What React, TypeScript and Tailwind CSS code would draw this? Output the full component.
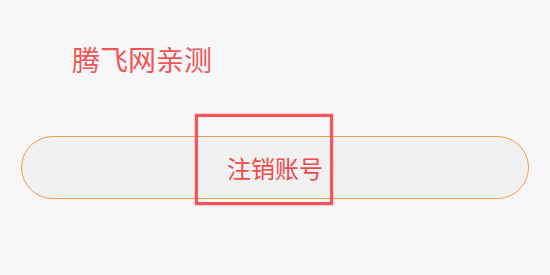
export default function App() {
  return (
    <div
      className="relative w-[550px] h-[275px] bg-[#f7f7f9] overflow-hidden"
      style={{ fontFamily: '"Noto Sans CJK SC", "Noto Sans", sans-serif' }}
    >
      <div className="pl-[72px] pt-[42px] text-[28px] leading-[34px] text-[#ef5557]">
        腾飞网亲测
      </div>

      <div className="mx-[21px] mt-[60px] h-[63px] rounded-full border border-[#f29a45] bg-[#f2f1f1] flex items-center justify-center">
        <span className="text-[24px] leading-[30px] text-[#ef4a4d]">注销账号</span>
      </div>

      {/* highlight box */}
      <div className="absolute left-[195px] top-[114px] w-[138px] h-[91px] border-[3px] border-[#f8555a] shadow-[0_0_1.5px_#ff6b6f]" />
    </div>
  );
}
